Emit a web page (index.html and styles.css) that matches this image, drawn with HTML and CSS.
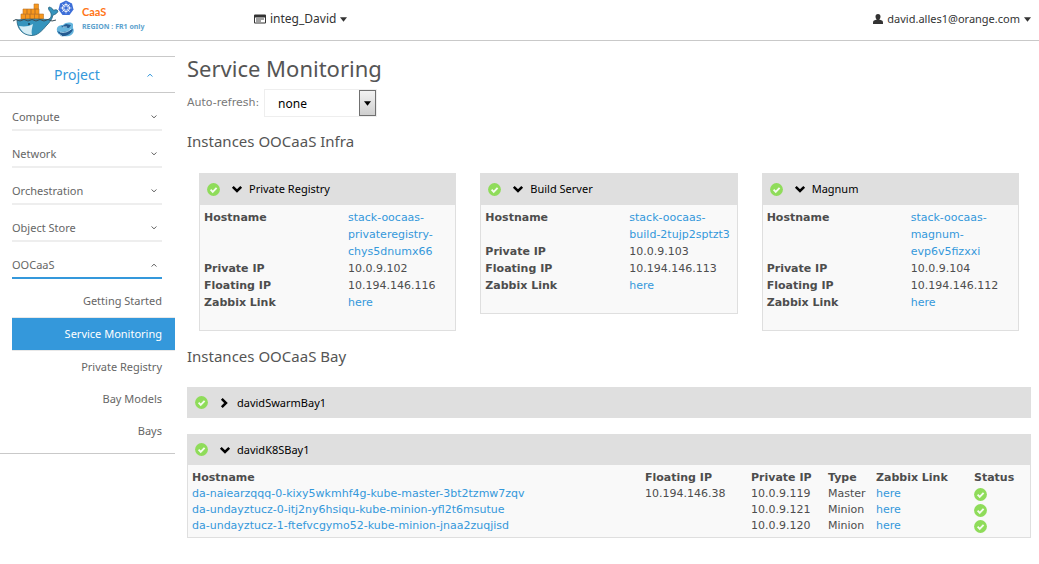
FILE: index.html
```html
<!DOCTYPE html>
<html lang="en">
<head>
<meta charset="utf-8">
<title>Service Monitoring</title>
<link rel="stylesheet" href="styles.css">
</head>
<body>
<svg class="sprite" aria-hidden="true">
  <symbol id="ok" viewBox="0 0 13 13"><circle cx="6.5" cy="6.5" r="6.4" fill="#8fdc5a"/><path d="M3.6 6.7l2.1 2.1 3.9-4" fill="none" stroke="#f4fbef" stroke-width="1.9"/></symbol>
  <symbol id="down" viewBox="0 0 12 12"><path d="M1.8 3.8L6 8l4.200-4.200" fill="none" stroke="currentColor" stroke-width="2.500"/></symbol>
  <symbol id="right" viewBox="0 0 12 12"><path d="M2.800 1.800L7 6l-4.200 4.200" fill="none" stroke="currentColor" stroke-width="2.500"/></symbol>
  <symbol id="thin-down" viewBox="0 0 6 4"><path d="M.5.5L3 2.800 5.500.5" fill="none" stroke="currentColor"/></symbol>
  <symbol id="thin-up" viewBox="0 0 6 4"><path d="M.5 3.500L3 1.200l2.500 2.300" fill="none" stroke="currentColor"/></symbol>
  <symbol id="caret" viewBox="0 0 8 5"><path d="M0 0h8L4 5z" fill="currentColor"/></symbol>
</svg>

<header class="topbar">
  <a class="brand" href="#">
    <svg class="brand-logo" viewBox="0 0 64 38" aria-hidden="true">
      <g fill="#f7981d" stroke="#b8742a" stroke-width=".6">
        <path d="M9 14h4.500v5H9zM13.500 14H18v5h-4.500zM18 14h4.500v5H18zM22.500 14H27v5h-4.500zM27 14h4.500v5H27z"/>
        <path d="M11 9h4v5h-4zM15 9h4v5h-4zM19 9h4v5h-4zM23 9h4v5h-4zM22 4h4.500v5H22z"/>
      </g>
      <path d="M5 20c7-1 20-1 31-.5 3-1 4-4 2.500-7.500-2-2-2.500-4-1.500-5 2 .3 3.500 1.500 4.500 3.300C43.500 9.500 45 9.500 46 11c-.5 2-2.500 3.500-5 4-1 5-4 8-7 11-4 5-9 10-15 9.500C10 35 5 28 5 20z" fill="#3594bd" stroke="#24617c" stroke-width=".8"/>
      <path d="M7 26c5 1 10 .5 14-2-1 4-2 8-1 11C13 35 9 31 7 26z" fill="#d5edf5"/>
      <path d="M1 21l3-1.500 4 1.500 4-1.500 4 1.500 4-1.500 4 1.500 4-1.500 4 1.500 4-1.500 4 1.500 4-1" fill="none" stroke="#384e59"/>
      <circle cx="17" cy="24" r="1" fill="#173d50"/>
      <path d="M54 .5l6 3L61.500 9.500l-4 5.500h-7l-4-5.500L48 3.500z" fill="#3d6fd8"/>
      <circle cx="54" cy="8" r="3.500" fill="none" stroke="#fff"/>
      <path d="M54 2.500v11M48.500 8h11M50.200 4.200l7.600 7.600M57.800 4.200l-7.600 7.600" stroke="#fff" stroke-width=".7"/>
      <circle cx="54" cy="8" r="1.300" fill="#3d6fd8"/>
      <path d="M45 31c-1-4 2-6 6-6 3-3 8-3 10-1v4c2 3 0 7-4 8-5 1-11 0-12-5z" fill="#66b5dd"/>
      <path d="M45 31c3 2 9 1 16-2-1 5-8 8-12 7M49 27l5-3 5 1-2 3z" fill="#245b91"/>
      <path d="M48 32c4 1 8 0 11-3M47 34l3 2M51 27h4" fill="none" stroke="#c5edff" stroke-width=".8"/>
    </svg>
    <span class="brand-text"><span class="brand-name">CaaS</span><span class="brand-region">REGION : FR1 only</span></span>
  </a>
  <button class="top-menu" type="button">
    <svg width="12" height="10" viewBox="0 0 12 10" aria-hidden="true"><path d="M1 .5h10a1 1 0 011 1v7a1 1 0 01-1 1H1a1 1 0 01-1-1v-7a1 1 0 011-1z" fill="#333"/><path d="M1 3.500h10v5H1z" fill="#fff"/><path d="M2 5h8M2 7h5" stroke="#444"/></svg>
    integ_David
    <svg class="caret" aria-hidden="true"><use href="#caret"/></svg>
  </button>
  <button class="top-menu user-menu" type="button">
    <svg width="10" height="10" viewBox="0 0 10 10" aria-hidden="true"><path d="M5 0c1.700 0 2.500 1 2.500 2.500S6.800 5 6.200 5.500L9 6.500c1 .5 1 1.500 1 3.500H0c0-2 0-3 1-3.500l2.800-1C3.200 5 2.500 4 2.500 2.500S3.300 0 5 0z" fill="#333"/></svg>
    david.alles1@orange.com
    <svg class="caret" aria-hidden="true"><use href="#caret"/></svg>
  </button>
</header>

<div class="layout">
  <nav class="sidebar">
    <button class="project" type="button">Project<svg class="chevron" aria-hidden="true"><use href="#thin-up"/></svg></button>
    <div class="groups">
      <button class="group" type="button">Compute<svg class="chevron" aria-hidden="true"><use href="#thin-down"/></svg></button>
      <button class="group" type="button">Network<svg class="chevron" aria-hidden="true"><use href="#thin-down"/></svg></button>
      <button class="group" type="button">Orchestration<svg class="chevron" aria-hidden="true"><use href="#thin-down"/></svg></button>
      <button class="group" type="button">Object Store<svg class="chevron" aria-hidden="true"><use href="#thin-down"/></svg></button>
      <button class="group open" type="button">OOCaaS<svg class="chevron" aria-hidden="true"><use href="#thin-up"/></svg></button>
    </div>
    <div class="links">
      <a href="#">Getting Started</a>
      <a class="active" href="#">Service Monitoring</a>
      <a href="#">Private Registry</a>
      <a href="#">Bay Models</a>
      <a href="#">Bays</a>
    </div>
  </nav>

  <main class="content">
    <h1>Service Monitoring</h1>
    <div class="refresh">
      <label for="refresh">Auto-refresh:</label>
      <span class="select-box">
        <select id="refresh"><option>none</option></select>
        <span class="select-arrow"><svg class="caret" aria-hidden="true"><use href="#caret"/></svg></span>
      </span>
    </div>

    <h2>Instances OOCaaS Infra</h2>
    <div class="cards">
      <section class="panel">
        <button class="panel-head" type="button"><svg class="ok"><use href="#ok"/></svg><svg class="toggle"><use href="#down"/></svg>Private Registry</button>
        <dl class="details">
          <dt>Hostname</dt><dd><a href="#">stack-oocaas-<wbr>privateregistry-<wbr>chys5dnumx66</a></dd>
          <dt>Private IP</dt><dd>10.0.9.102</dd>
          <dt>Floating IP</dt><dd>10.194.146.116</dd>
          <dt>Zabbix Link</dt><dd><a href="#">here</a></dd>
        </dl>
      </section>
      <section class="panel">
        <button class="panel-head" type="button"><svg class="ok"><use href="#ok"/></svg><svg class="toggle"><use href="#down"/></svg>Build Server</button>
        <dl class="details">
          <dt>Hostname</dt><dd><a href="#">stack-oocaas-<wbr><span class="keep">build-2tujp2sptzt3</span></a></dd>
          <dt>Private IP</dt><dd>10.0.9.103</dd>
          <dt>Floating IP</dt><dd>10.194.146.113</dd>
          <dt>Zabbix Link</dt><dd><a href="#">here</a></dd>
        </dl>
      </section>
      <section class="panel">
        <button class="panel-head" type="button"><svg class="ok"><use href="#ok"/></svg><svg class="toggle"><use href="#down"/></svg>Magnum</button>
        <dl class="details">
          <dt>Hostname</dt><dd><a href="#">stack-oocaas-<wbr>magnum-<wbr>evp6v5fizxxi</a></dd>
          <dt>Private IP</dt><dd>10.0.9.104</dd>
          <dt>Floating IP</dt><dd>10.194.146.112</dd>
          <dt>Zabbix Link</dt><dd><a href="#">here</a></dd>
        </dl>
      </section>
    </div>

    <h2>Instances OOCaaS Bay</h2>
    <div class="bays">
      <section class="panel">
        <button class="panel-head" type="button"><svg class="ok"><use href="#ok"/></svg><svg class="toggle"><use href="#right"/></svg>davidSwarmBay1</button>
      </section>
      <section class="panel">
        <button class="panel-head" type="button"><svg class="ok"><use href="#ok"/></svg><svg class="toggle"><use href="#down"/></svg>davidK8SBay1</button>
        <div class="table-wrap">
          <table>
            <colgroup><col><col class="c-float"><col class="c-private"><col class="c-type"><col class="c-link"><col class="c-status"></colgroup>
            <thead><tr><th>Hostname</th><th>Floating IP</th><th>Private IP</th><th>Type</th><th>Zabbix Link</th><th>Status</th></tr></thead>
            <tbody>
              <tr><td><a href="#">da-naiearzqqq-0-kixy5wkmhf4g-kube-master-3bt2tzmw7zqv</a></td><td>10.194.146.38</td><td>10.0.9.119</td><td>Master</td><td><a href="#">here</a></td><td><svg class="ok"><use href="#ok"/></svg></td></tr>
              <tr><td><a href="#">da-undayztucz-0-itj2ny6hsiqu-kube-minion-yfl2t6msutue</a></td><td></td><td>10.0.9.121</td><td>Minion</td><td><a href="#">here</a></td><td><svg class="ok"><use href="#ok"/></svg></td></tr>
              <tr><td><a href="#">da-undayztucz-1-ftefvcgymo52-kube-minion-jnaa2zuqjisd</a></td><td></td><td>10.0.9.120</td><td>Minion</td><td><a href="#">here</a></td><td><svg class="ok"><use href="#ok"/></svg></td></tr>
            </tbody>
          </table>
        </div>
      </section>
    </div>
  </main>
</div>
</body>
</html>
```
FILE: styles.css
```css
* { box-sizing: border-box; }
body { margin: 0; background: #fff; color: #4d4d4d; font: 11px/16px "DejaVu Sans", sans-serif; }
button { margin: 0; padding: 0; border: 0; background: none; color: inherit; font: inherit; text-align: left; cursor: pointer; }
a { color: #3498db; text-decoration: none; }
svg { flex: none; }
.sprite { position: absolute; width: 0; height: 0; }
.caret { width: 7px; height: 5px; }
.ok { width: 13px; height: 13px; }

.topbar { display: flex; align-items: center; height: 41px; padding: 0 8px 2px 12px; border-bottom: 1px solid #c9c9c9; }
.brand { display: flex; gap: 6px; width: 242px; }
.brand-logo { width: 64px; height: 38px; }
.brand-text { display: flex; flex-direction: column; padding-top: 5px; }
.brand-name { color: #ff7518; font: bold 11px/14px Lato, sans-serif; }
.brand-region { color: #5ba1cd; font: bold 7px/16px "Noto Sans", sans-serif; }
.top-menu { display: flex; align-items: center; gap: 4px; color: #333; font: 12px/16px "Noto Sans", sans-serif; }
.user-menu { margin-left: auto; font-size: 11px; }

.layout { display: flex; gap: 12px; padding: 15px 8px 24px 0; }
.sidebar { flex: none; width: 175px; align-self: flex-start; border: solid #c9c9c9; border-width: 1px 0; color: #666; font-family: "Noto Sans", sans-serif; }
.project { display: flex; align-items: center; justify-content: space-between; width: 100%; height: 36px; padding: 0 22px 0 54px; border-bottom: 1px solid #c9c9c9; color: #3498db; font-size: 14px; }
.chevron { width: 6px; height: 4px; }
.groups { padding: 1px 13px 0 12px; }
.group { display: flex; align-items: center; justify-content: space-between; width: 100%; height: 37px; padding: 10px 5px 0 0; border-bottom: 2px solid #eee; }
.group.open { border-color: #3498db; }
.links { display: flex; flex-direction: column; padding: 6px 0 6px 12px; }
.links a { padding: 8px 13px 8px 0; color: #666; text-align: right; }
.links .active { border: solid #e8e8e8; border-width: 1px 0; background: #3498db; color: #fff; }

.content { flex: 1; min-width: 0; }
h1 { margin: 0; color: #555; font: 22px/24px "Noto Sans", sans-serif; }
h2 { margin: 0; color: #555; font: 15px/20px "Noto Sans", sans-serif; }
.refresh { display: flex; align-items: flex-start; gap: 5px; margin: 9px 0 14px; color: #777; }
.refresh label { padding-top: 6px; }
.select-box { position: relative; width: 113px; }
select { display: block; appearance: none; width: 100%; height: 28px; padding: 0 20px 0 13px; border: 1px solid #eee; border-radius: 0; background: #fff; color: #000; font: 12px "Noto Sans", sans-serif; }
.select-arrow { position: absolute; inset: 1px 1px 1px auto; display: flex; align-items: center; justify-content: center; width: 17px; border: 1px solid #707070; background: linear-gradient(#f2f2f2, #cfcfcf); color: #000; pointer-events: none; }

.cards { display: grid; grid-template-columns: repeat(3, 1fr); align-items: start; gap: 24px; padding: 22px 12px 15px; }
.panel-head { display: flex; align-items: center; width: 100%; height: 31px; padding: 0 8px; background: #dfdfdf; color: #000; font-family: "Noto Sans", sans-serif; }
.cards .panel-head { height: 32px; }
.toggle { width: 12px; height: 12px; margin: 0 6px 0 11px; }
.details { display: grid; grid-template-columns: 144px 1fr; margin: 0; padding: 4px 0 19px 4px; border: solid #dfdfdf; border-width: 0 1px 1px; background: #f9f9f9; line-height: 17px; }
.details dt { font-weight: bold; }
.details dd { margin: 0; }
.keep { white-space: nowrap; }

.bays { display: flex; flex-direction: column; gap: 16px; padding-top: 21px; }
.table-wrap { padding: 5px 0 3px 4px; border: solid #dfdfdf; border-width: 0 1px 1px; background: #f9f9f9; }
table { width: 100%; table-layout: fixed; border-collapse: collapse; }
th, td { height: 16px; padding: 0; text-align: left; white-space: nowrap; }
td .ok { display: block; }
.c-float { width: 106px; }
.c-private { width: 77px; }
.c-type { width: 48px; }
.c-link { width: 98px; }
.c-status { width: 56px; }
```
